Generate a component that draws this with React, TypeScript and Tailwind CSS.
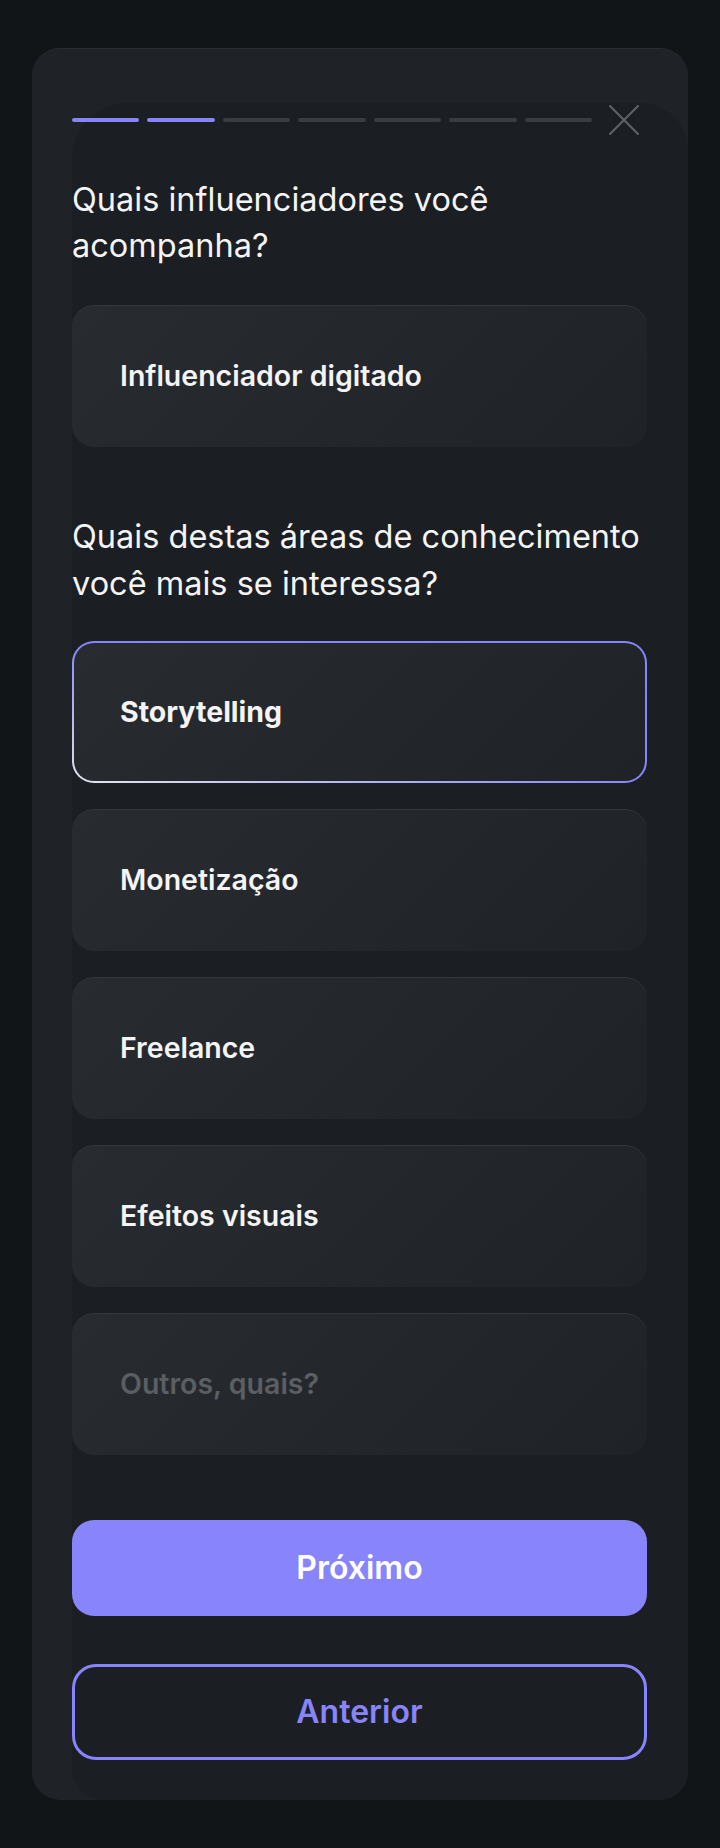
const steps = [true, true, false, false, false, false, false];

const options = [
  { label: "Storytelling", selected: true },
  { label: "Monetização", selected: false },
  { label: "Freelance", selected: false },
  { label: "Efeitos visuais", selected: false },
];

function CloseIcon() {
  return (
    <svg width="30" height="30" viewBox="0 0 30 30" fill="none" className="mr-[8px] shrink-0">
      <path d="M1 1L29 29M29 1L1 29" stroke="#606368" strokeWidth="2" strokeLinecap="round" />
    </svg>
  );
}

function OptionBox({
  label,
  selected = false,
  placeholder = false,
}: {
  label: string;
  selected?: boolean;
  placeholder?: boolean;
}) {
  if (selected) {
    return (
      <div className="rounded-[22px] bg-[linear-gradient(to_top_right,#e3e5ea_0%,#8884fc_50%)] p-[2px]">
        <div className="flex h-[138px] items-center rounded-[20px] bg-[linear-gradient(135deg,#282c30_0%,#1f2226_100%)] pl-[46px]">
          <span className="text-[28.5px] font-bold text-[#f4f4f5]">{label}</span>
        </div>
      </div>
    );
  }

  return (
    <div className="flex h-[142px] items-center rounded-[22px] border-t border-[#34373b] bg-[linear-gradient(135deg,#282c30_0%,#1f2226_100%)] pl-[48px]">
      <span
        className={`text-[28.5px] font-semibold ${
          placeholder ? "text-[#5b5e62]" : "text-[#f4f4f5]"
        }`}
      >
        {label}
      </span>
    </div>
  );
}

export default function App() {
  return (
    <div
      className="min-h-screen bg-[#121518] px-[32px] pt-[48px] pb-[48px]"
      style={{ fontFamily: "Inter, 'Noto Sans', sans-serif" }}
    >
      <div className="flex overflow-hidden rounded-[28px] border-t border-[#2a2d31] bg-[#1f2226] pl-[40px] pt-[54px]">
        <div className="flex-1 rounded-tl-[56px] rounded-tr-[48px] rounded-bl-[32px] bg-[#1b1e22] pr-[41px] pt-[2px] pb-[40px]">
          <div className="flex h-[30px] items-center gap-[17px]">
            <div className="flex flex-1 gap-[8px]">
              {steps.map((done, i) => (
                <div
                  key={i}
                  className={`h-[4px] flex-1 rounded-full ${
                    done ? "bg-[#8884fc]" : "bg-[#393c41]"
                  }`}
                />
              ))}
            </div>
            <CloseIcon />
          </div>

          <h2 className="mt-[42px] text-[32.5px] leading-[46px] font-normal text-[#f4f4f5]">
            Quais influenciadores você acompanha?
          </h2>

          <div className="mt-[36px]">
            <OptionBox label="Influenciador digitado" />
          </div>

          <h2 className="mt-[66px] -mr-[6px] text-[32.5px] leading-[47px] font-normal text-[#f4f4f5]">
            Quais destas áreas de conhecimento você mais se interessa?
          </h2>

          <div className="mt-[34px] flex flex-col gap-[26px]">
            {options.map((o) => (
              <OptionBox key={o.label} label={o.label} selected={o.selected} />
            ))}
            <OptionBox label="Outros, quais?" placeholder />
          </div>

          <button
            type="button"
            className="mt-[65px] flex h-[96px] w-full items-center justify-center rounded-[22px] bg-[#8884fc] text-[32px] font-semibold text-white"
          >
            Próximo
          </button>

          <button
            type="button"
            className="mt-[48px] flex h-[96px] w-full items-center justify-center rounded-[24px] border-[3px] border-[#8884fc] text-[32px] font-semibold text-[#8884fc]"
          >
            Anterior
          </button>
        </div>
      </div>
    </div>
  );
}
